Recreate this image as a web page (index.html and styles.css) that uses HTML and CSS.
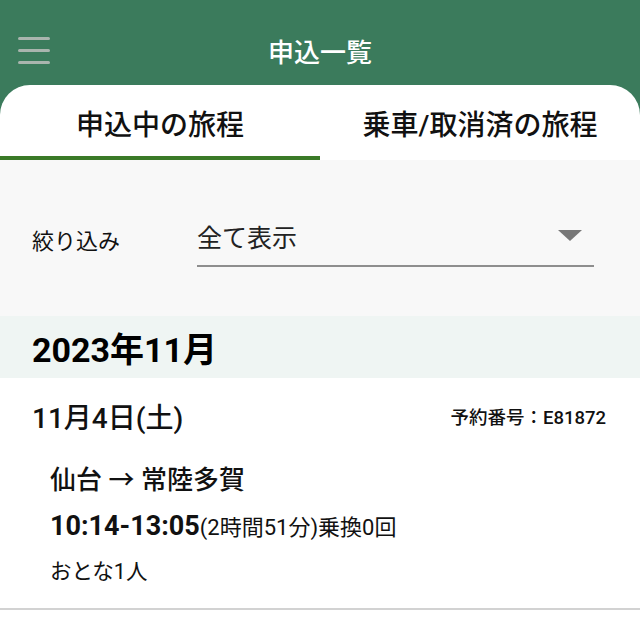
FILE: index.html
```html
<!DOCTYPE html>
<html lang="ja">
<head>
    <meta charset="UTF-8">
    <meta name="viewport" content="width=device-width, initial-scale=1.0">
    <title>申込一覧</title>
    <link rel="stylesheet" href="styles.css">
</head>
<body>
    <header class="app-bar">
        <button class="menu-button" aria-label="メニュー">
            <span></span><span></span><span></span>
        </button>
        <h1 class="app-title">申込一覧</h1>
    </header>

    <main class="sheet">
        <nav class="tabs">
            <div class="tab active">申込中の旅程</div>
            <div class="tab">乗車/取消済の旅程</div>
        </nav>

        <section class="filter">
            <span class="filter-label">絞り込み</span>
            <div class="select">
                <span class="select-value">全て表示</span>
                <span class="select-arrow"></span>
            </div>
        </section>

        <h2 class="month">2023年11月</h2>

        <article class="trip">
            <div class="trip-head">
                <span class="trip-date">11月4日(土)</span>
                <span class="trip-number">予約番号：E81872</span>
            </div>
            <div class="trip-route">仙台 → 常陸多賀</div>
            <div class="trip-time"><b>10:14-13:05</b>(2時間51分)乗換0回</div>
            <div class="trip-people">おとな1人</div>
        </article>
    </main>
</body>
</html>
```

FILE: styles.css
```css
body {
    margin: 0;
    font-family: Roboto, "Noto Sans CJK JP", sans-serif;
    background-color: #3b7b5c;
    color: #111;
    height: 624px;
    overflow: hidden;
}

.app-bar {
    height: 85px;
    display: flex;
    align-items: flex-start;
    position: relative;
}

.menu-button {
    width: 32px;
    margin: 37px 0 0 18px;
    padding: 0;
    border: none;
    background: none;
    display: flex;
    flex-direction: column;
    gap: 9px;
}

.menu-button span {
    display: block;
    height: 3px;
    border-radius: 2px;
    background-color: #a9b5ae;
}

.app-title {
    position: absolute;
    left: 0;
    right: 0;
    top: 36px;
    margin: 0;
    text-align: center;
    font-size: 26px;
    font-weight: 500;
    line-height: 34px;
    color: #fff;
    pointer-events: none;
}

.sheet {
    background-color: #fff;
    border-radius: 30px 30px 0 0;
    min-height: 539px;
    overflow: hidden;
}

.tabs {
    display: flex;
    height: 75px;
}

.tab {
    flex: 1;
    display: flex;
    justify-content: center;
    align-items: center;
    padding-top: 4px;
    font-size: 28px;
    font-weight: 500;
    border-bottom: 4px solid transparent;
    box-sizing: border-box;
}

.tab.active {
    border-bottom-color: #3a7a27;
}

.filter {
    background-color: #f8f8f8;
    height: 156px;
    display: flex;
    align-items: center;
    padding: 0 46px 0 32px;
}

.filter-label {
    width: 165px;
    font-size: 22px;
    margin-top: 2px;
}

.select {
    flex: 1;
    display: flex;
    justify-content: space-between;
    align-items: center;
    height: 50px;
    margin-top: 6px;
    border-bottom: 2px solid #8e8e8e;
    padding-right: 12px;
}

.select-value {
    font-size: 25px;
    color: #222;
    margin-top: -8px;
}

.select-arrow {
    width: 0;
    height: 0;
    border-left: 12px solid transparent;
    border-right: 12px solid transparent;
    border-top: 11px solid #777;
    margin-top: -10px;
}

.month {
    margin: 0;
    background-color: #eff5f3;
    height: 62px;
    padding: 0 32px;
    display: flex;
    align-items: center;
    font-size: 34px;
    font-weight: 700;
    color: #000;
}

.trip {
    padding: 18px 34px 0 32px;
    border-bottom: 2px solid #d2d2d2;
    height: 232px;
    box-sizing: border-box;
}

.trip-head {
    display: flex;
    justify-content: space-between;
    align-items: center;
    height: 40px;
}

.trip-date {
    font-size: 28px;
    font-weight: 500;
}

.trip-number {
    font-size: 18.5px;
    font-weight: 500;
}

.trip-route {
    margin: 26px 0 0 18px;
    font-size: 26px;
    font-weight: 500;
    line-height: 36px;
}

.trip-time {
    margin: 10px 0 0 18px;
    font-size: 22px;
    line-height: 36px;
}

.trip-time b {
    font-size: 27px;
    font-weight: 700;
}

.trip-people {
    margin: 11px 0 0 18px;
    font-size: 21.5px;
    line-height: 30px;
}
```
